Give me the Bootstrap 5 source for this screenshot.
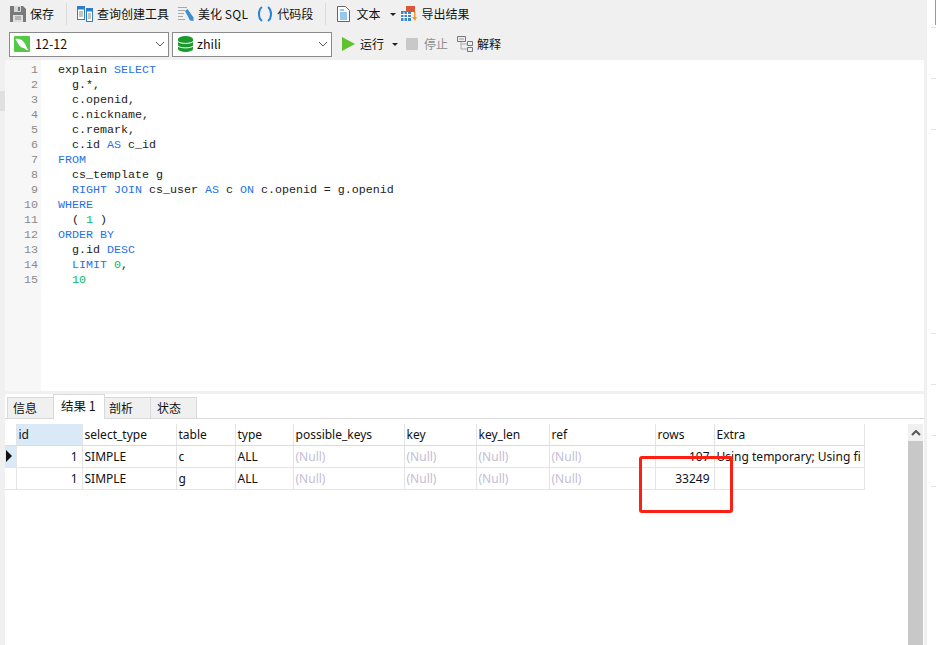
<!DOCTYPE html>
<html lang="zh">
<head>
<meta charset="UTF-8">
<title>查询</title>
<link href="https://cdn.jsdelivr.net/npm/bootstrap@5.3.0/dist/css/bootstrap.min.css" rel="stylesheet">
<style>
  html, body { height: 100%; }
  body { background: #f0f0f0; font-family: "Noto Sans CJK SC", "Liberation Sans", sans-serif; font-size: 12px; color: #111; overflow: hidden; width: 936px; height: 645px; }
  .app-wrap { width: 924px; height: 645px; padding-left: 5px; }
  .tool-row { height: 28px; margin-left: -5px; padding-left: 10px; }
  .tool-row2 { height: 32px; margin-left: -5px; padding-left: 9px; }
  .tool-item { display: flex; align-items: center; gap: 4px; white-space: nowrap; }
  .tool-sep { width: 1px; height: 22px; background: #dcdcdc; margin-left: 12px; }
  .caret-dn { width: 0; height: 0; border-left: 3px solid transparent; border-right: 3px solid transparent; border-top: 3px solid #222; margin-left: 4px; }
  .t-query { margin-left: 10px; }
  .t-pretty { margin-left: 9px; }
  .t-pretty .sql-label { letter-spacing: .35px; }
  .t-snip { margin-left: 9px; }
  .t-text { margin-left: 11px; gap: 6px; }
  .t-export { margin-left: 5px; }
  .pick { height: 25px; width: 160px; background: #fff; border: 1px solid #8a8a8a; display: flex; align-items: center; padding-left: 4px; gap: 5px; font-size: 12.5px; }
  .pick.db-pick { margin-left: 3px; padding-left: 5px; gap: 4px; }
  .pick svg.chev { margin-left: auto; margin-right: 3px; }
  .t-run { margin-left: 10px; gap: 5px; }
  .t-run .caret-dn { margin-left: 3px; }
  .t-stop { margin-left: 8px; gap: 6px; color: #8c8c8c; }
  .t-explain { margin-left: 9px; }
  .editor-pane { height: 331px; background: #fff; display: flex; }
  .gutter { width: 36px; background: #f7f7f7; text-align: right; padding: 3px 3px 0 0; color: #8a8a8a; }
  .gutter div, .code-lines div { height: 15px; line-height: 15px; font-family: "Liberation Mono", monospace; font-size: 11.67px; white-space: pre; }
  .code-lines { padding: 3px 0 0 17px; color: #222; }
  .kw { color: #1f72e6; }
  .num { color: #00ba6c; }
  .tab-bar { height: 25px; margin-top: 3px; background: #fff; padding-left: 2px; padding-top: 3px; border-bottom: 1px solid #d9d9d9; }
  .tab-cell { height: 21px; width: 46px; padding-left: 5px; border: 1px solid #d9d9d9; border-bottom: 0; border-right: 0; line-height: 20px; background: #f0f0f0; }
  .tab-cell:last-child { border-right: 1px solid #d9d9d9; width: 47px; padding-left: 6px; }
  .tab-cell.on { background: #fff; width: 52px; height: 25px; margin-top: -3px; padding-left: 7px; line-height: 22px; border-right: 1px solid #d9d9d9; margin-right: -1px; z-index: 1; position: relative; font-size: 12.5px; }
  .tab-cell.on + .tab-cell { padding-left: 4px; }
  .grid-pane { background: #fff; height: 226px; display: flex; position: relative; }
  .grid-wrap { flex: 1; padding-top: 5px; }
  table.res { border-collapse: collapse; table-layout: fixed; width: 859px; font-family: "Noto Sans", "Liberation Sans", sans-serif; font-size: 12px; }
  table.res col:nth-child(1) { width: 11px; }
  table.res col:nth-child(2) { width: 66px; }
  table.res col:nth-child(3) { width: 94px; }
  table.res col:nth-child(4) { width: 59px; }
  table.res col:nth-child(5) { width: 58px; }
  table.res col:nth-child(6) { width: 111px; }
  table.res col:nth-child(7) { width: 72px; }
  table.res col:nth-child(8) { width: 73px; }
  table.res col:nth-child(9) { width: 106px; }
  table.res col:nth-child(10) { width: 59px; }
  table.res col:nth-child(11) { width: 150px; }
  table.res td, table.res th { border: 1px solid #e4e4e4; border-top: 0; border-left: 0; height: 22px; padding: 1px 4px 0 2px; font-weight: 400; white-space: nowrap; overflow: hidden; vertical-align: middle; }
  table.res th { height: 21px; border-bottom-color: #dcdcdc; }
  table.res th.sel { background: #d9e9f8; }
  table.res td.mk, table.res th.mk { padding: 0; background: #fff; }
  table.res td.mk.cur { background: #d9e9f8; }
  .null-v { color: #c3bdd6; }
  .vbar { width: 15px; background: #c8c8c8; margin-top: 5px; margin-right: 1px; }
  .vbar-up { background: #f0f0f0; height: 17px; display: flex; align-items: center; justify-content: center; }
  .red-mark { position: absolute; left: 634px; top: 37px; width: 94px; height: 57px; border: 3px solid #fb1f14; border-radius: 3px; }
  .left-nub { position: fixed; left: 0; top: 91px; width: 5px; height: 20px; background: #e0e0e0; }
  .far-edge { position: fixed; left: 927px; top: 0; width: 9px; height: 645px; background: #fff; }
  .far-edge i { display: block; position: absolute; left: 4px; width: 5px; height: 1px; background: #e3e3e3; }
  .far-edge b { display: block; position: absolute; left: 8px; top: 0; width: 1px; height: 25px; background: #999; }
  .tick-a { top: 27px; } .tick-b { top: 78px; } .tick-c { top: 129px; } .tick-d { top: 333px; } .tick-e { top: 384px; } .tick-f { top: 435px; } .tick-g { top: 486px; }
</style>
</head>
<body>
<div class="left-nub"></div>
<div class="app-wrap">
  <div class="tool-row d-flex align-items-center">
    <div class="tool-item"><svg width="16" height="16" viewBox="0 0 16 16"><path d="M0 0h13l3 3v13H0z" fill="#7a7a7a"/><rect x="4" y="0" width="7" height="6" fill="#d8d8d8"/><rect x="8" y="1" width="2" height="4" fill="#7a7a7a"/><rect x="3" y="9" width="10" height="7" fill="#dedede"/><path d="M5 11h6M5 13h6" stroke="#888"/></svg>保存</div>
    <div class="tool-sep"></div>
    <div class="tool-item t-query"><svg width="16" height="16" viewBox="0 0 16 16"><rect x=".5" y=".5" width="7" height="13" fill="#fff" stroke="#2f7fc6"/><rect x=".5" y=".5" width="7" height="3" fill="#2f7fc6"/><rect x="9.5" y="2.500" width="6" height="13" fill="#fff" stroke="#2f7fc6"/><rect x="9.5" y="2.500" width="6" height="3" fill="#2f7fc6"/><path d="M2 6h4M2 8h4M2 10h4M11 8h3M11 10h3M11 12h3" stroke="#8a8a8a"/></svg>查询创建工具</div>
    <div class="tool-item t-pretty"><svg width="16" height="16" viewBox="0 0 16 16"><path d="M0 1.500h9M0 4.500h7M0 7.500h6M0 10.500h5M0 13.500h7" stroke="#a8a8a8"/><path d="M7 5l2.500-2 6 8.500v3.500l-3.500-.5z" fill="#3b8ed0"/></svg><span>美化 <span class="sql-label">SQL</span></span></div>
    <div class="tool-item t-snip"><svg width="16" height="16" viewBox="0 0 16 16"><path d="M5 1C1 4 1 12 5 15M11 1c4 3 4 11 0 14" fill="none" stroke="#2384d8" stroke-width="2"/></svg>代码段</div>
    <div class="tool-sep"></div>
    <div class="tool-item t-text"><svg width="13" height="16" viewBox="0 0 13 16"><path d="M.5.500h8l4 4v11H.5z" fill="#fff" stroke="#666"/><path d="M3 4h4M3 7h7M3 9h7M3 11h7M3 13h7" stroke="#2f8fe0"/></svg>文本<span class="caret-dn"></span></div>
    <div class="tool-item t-export"><svg width="16" height="16" viewBox="0 0 16 16"><rect x="5" y="0" width="9" height="6" fill="#d9573a"/><rect x="0" y="5" width="10" height="10" fill="#3d85c6"/><path d="M3 6v9M6.500 6v9M0 8.500h10M0 11.500h10" stroke="#fff"/><path d="M13 6v5h-2l3 4 2-4h-1.500V6z" fill="#f09a2a"/></svg>导出结果</div>
  </div>
  <div class="tool-row2 d-flex align-items-center">
    <div class="pick"><svg width="16" height="16" viewBox="0 0 16 16"><rect width="16" height="16" rx="1" fill="#55c845"/><path d="M1.500 3c4-1 8.500 1.500 10.500 7l2.500 4.500c-2.500-.5-3.500-1.500-4.500-2.500-2 0-4-1-5-3L3 6z" fill="#fff"/></svg><span>12-12</span><svg class="chev" width="10" height="6" viewBox="0 0 10 6"><path d="M1 1l4 4 4-4" fill="none" stroke="#555"/></svg></div>
    <div class="pick db-pick"><svg width="15" height="16" viewBox="0 0 15 16"><path d="M0 3a7.500 3 0 0 1 15 0v10a7.500 3 0 0 1-15 0z" fill="#1a9a2d"/><path d="M0 5.500c2 2.500 13 2.500 15 0M0 10c2 2.500 13 2.500 15 0" fill="none" stroke="#fff"/></svg><span>zhili</span><svg class="chev" width="10" height="6" viewBox="0 0 10 6"><path d="M1 1l4 4 4-4" fill="none" stroke="#555"/></svg></div>
    <div class="tool-item t-run"><svg width="13" height="14" viewBox="0 0 13 14"><path d="M0 0l13 7-13 7z" fill="#5fc22e"/></svg>运行<span class="caret-dn"></span></div>
    <div class="tool-item t-stop"><svg width="12" height="12" viewBox="0 0 12 12"><rect width="12" height="12" fill="#c8c8c8"/></svg>停止</div>
    <div class="tool-item t-explain"><svg width="16" height="16" viewBox="0 0 16 16"><path d="M.5.500h8v5h-8zM10.500 5.500h5v4h-5zM10.500 11.500h5v4h-5z" fill="none" stroke="#777"/><path d="M2 3h5" stroke="#999"/><path d="M4 6v7h6M4 8h6" fill="none" stroke="#aaa"/></svg>解释</div>
  </div>
  <div class="editor-pane">
    <div class="gutter" id="gutter"></div>
    <div class="code-lines">
      <div>explain <span class="kw">SELECT</span></div>
      <div>  g.*,</div>
      <div>  c.openid,</div>
      <div>  c.nickname,</div>
      <div>  c.remark,</div>
      <div>  c.id <span class="kw">AS</span> c_id</div>
      <div><span class="kw">FROM</span></div>
      <div>  cs_template g</div>
      <div>  <span class="kw">RIGHT JOIN</span> cs_user <span class="kw">AS</span> c <span class="kw">ON</span> c.openid = g.openid</div>
      <div><span class="kw">WHERE</span></div>
      <div>  ( <span class="num">1</span> )</div>
      <div><span class="kw">ORDER BY</span></div>
      <div>  g.id <span class="kw">DESC</span></div>
      <div>  <span class="kw">LIMIT</span> <span class="num">0</span>,</div>
      <div>  <span class="num">10</span></div>
    </div>
  </div>
  <div class="tab-bar d-flex">
    <div class="tab-cell">信息</div>
    <div class="tab-cell on">结果 1</div>
    <div class="tab-cell">剖析</div>
    <div class="tab-cell">状态</div>
  </div>
  <div class="grid-pane">
    <div class="grid-wrap">
      <table class="res">
        <colgroup><col><col><col><col><col><col><col><col><col><col><col></colgroup>
        <tr><th class="mk"></th><th class="sel">id</th><th>select_type</th><th>table</th><th>type</th><th>possible_keys</th><th>key</th><th>key_len</th><th>ref</th><th>rows</th><th>Extra</th></tr>
        <tr><td class="mk cur"><svg class="d-block" width="8" height="12" viewBox="0 0 8 12"><path d="M1 0l6 6-6 6z" fill="#111"/></svg></td><td class="text-end">1</td><td>SIMPLE</td><td>c</td><td>ALL</td><td class="null-v">(Null)</td><td class="null-v">(Null)</td><td class="null-v">(Null)</td><td class="null-v">(Null)</td><td class="text-end">107</td><td>Using temporary; Using fi</td></tr>
        <tr><td class="mk"></td><td class="text-end">1</td><td>SIMPLE</td><td>g</td><td>ALL</td><td class="null-v">(Null)</td><td class="null-v">(Null)</td><td class="null-v">(Null)</td><td class="null-v">(Null)</td><td class="text-end">33249</td><td></td></tr>
      </table>
    </div>
    <div class="vbar"><div class="vbar-up"><svg width="10" height="6" viewBox="0 0 10 6"><path d="M1 5l4-4 4 4" fill="none" stroke="#555" stroke-width="2"/></svg></div></div>
    <div class="red-mark"></div>
  </div>
</div>
<div class="far-edge"><b></b><i class="tick-a"></i><i class="tick-b"></i><i class="tick-c"></i><i class="tick-d"></i><i class="tick-e"></i><i class="tick-f"></i><i class="tick-g"></i></div>
<script>
  // line numbers for the editor gutter
  const gutter = document.getElementById('gutter');
  for (let i = 1; i <= 15; i++) {
    const row = document.createElement('div');
    row.textContent = i;
    gutter.appendChild(row);
  }
</script>
<script src="https://cdn.jsdelivr.net/npm/bootstrap@5.3.0/dist/js/bootstrap.bundle.min.js"></script>
</body>
</html>
